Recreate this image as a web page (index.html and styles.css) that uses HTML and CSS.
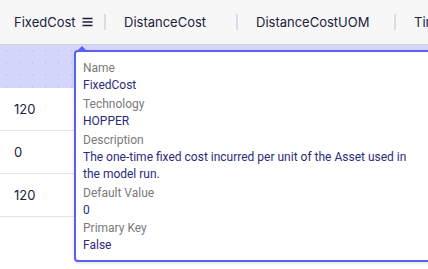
FILE: index.html
```html
<!DOCTYPE html>
<html>
<head>
<meta charset="utf-8">
<link rel="stylesheet" href="styles.css">
</head>
<body>
<div class="grid">
  <div class="header">
    <div class="hcell c1">FixedCost
      <svg class="menu" width="11" height="10" viewBox="0 0 11 10"><path d="M0.5 1.5h10M0.5 5h10M0.5 8.5h10" stroke="#1d1d3a" stroke-width="1.3"/></svg>
    </div>
    <div class="sep"></div>
    <div class="hcell c2">DistanceCost</div>
    <div class="sep"></div>
    <div class="hcell c3">DistanceCostUOM</div>
    <div class="sep"></div>
    <div class="hcell c4">Time</div>
  </div>
  <div class="band"></div>
  <div class="row"><div class="cell">120</div></div>
  <div class="row"><div class="cell">0</div></div>
  <div class="row"><div class="cell">120</div></div>
</div>
<div class="tooltip">
  <div class="arrow"></div>
  <div class="group"><div class="label">Name</div><div class="value">FixedCost</div></div>
  <div class="group"><div class="label">Technology</div><div class="value">HOPPER</div></div>
  <div class="group"><div class="label">Description</div><div class="value">The one-time fixed cost incurred per unit of the Asset used in the model run.</div></div>
  <div class="group"><div class="label">Default Value</div><div class="value">0</div></div>
  <div class="group"><div class="label">Primary Key</div><div class="value">False</div></div>
</div>
</body>
</html>
```
FILE: styles.css
```css
html, body {
  margin: 0;
  padding: 0;
  background: #ffffff;
  width: 428px;
  height: 269px;
  overflow: hidden;
  font-family: Inter, "Noto Sans", sans-serif;
  position: relative;
}
.grid {
  display: flex;
  flex-direction: column;
}
.header {
  height: 44px;
  background: #f7f7f7;
  border-bottom: 1px solid #cfcfd4;
  display: flex;
  align-items: center;
  white-space: nowrap;
  font-size: 13px;
  color: #22223a;
  overflow: hidden;
}
.hcell {
  display: flex;
  align-items: center;
  box-sizing: border-box;
  flex-shrink: 0;
}
.c1 { padding-left: 14px; width: 104px; }
.c2 { padding-left: 18px; width: 130px; }
.c3 { padding-left: 18px; width: 156px; }
.c4 { padding-left: 18px; }
.menu { margin-left: 6px; }
.sep {
  flex-shrink: 0;
  width: 2px;
  height: 16px;
  background: #d9dce6;
}
.band {
  height: 43px;
  background-color: #d4d6fb;
  background-image: radial-gradient(circle, #c0c3f3 0.5px, transparent 0.9px);
  background-size: 13px 12px;
}
.row {
  height: 42px;
  border-bottom: 1px solid #e3e3e8;
  display: flex;
  align-items: center;
}
.cell {
  padding-left: 14px;
  font-size: 13px;
  color: #22223a;
}
.tooltip {
  position: absolute;
  left: 74px;
  top: 50px;
  width: 343px;
  height: 200px;
  background: #ffffff;
  border: 2px solid #5b60f2;
  border-radius: 4px;
  padding: 8px 8px 0 7px;
  box-sizing: content-box;
  font-family: Roboto, "Liberation Sans", sans-serif;
  font-size: 12px;
  line-height: 17px;
  box-shadow: 0 1px 3px rgba(0,0,0,0.15);
}
.arrow {
  position: absolute;
  left: 1px;
  top: -6px;
  width: 0;
  height: 0;
  border-left: 5px solid transparent;
  border-right: 5px solid transparent;
  border-bottom: 5px solid #5b60f2;
}
.group { margin-bottom: 2px; }
.group:nth-child(5) { margin-bottom: 1px; }
.label { color: #7a7a7a; }
.value { color: #2b2b7a; }
```
